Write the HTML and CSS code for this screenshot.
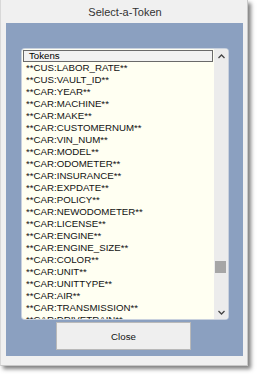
FILE: index.html
```html
<!DOCTYPE html>
<html>
<head>
<meta charset="utf-8">
<link rel="stylesheet" href="styles.css">
</head>
<body>
<div class="window">
  <div class="title">Select-a-Token</div>
  <div class="panel">
    <div class="listbox">
      <div class="list">
        <div class="header">Tokens</div>
        <div class="row">**CUS:LABOR_RATE**</div>
        <div class="row">**CUS:VAULT_ID**</div>
        <div class="row">**CAR:YEAR**</div>
        <div class="row">**CAR:MACHINE**</div>
        <div class="row">**CAR:MAKE**</div>
        <div class="row">**CAR:CUSTOMERNUM**</div>
        <div class="row">**CAR:VIN_NUM**</div>
        <div class="row">**CAR:MODEL**</div>
        <div class="row">**CAR:ODOMETER**</div>
        <div class="row">**CAR:INSURANCE**</div>
        <div class="row">**CAR:EXPDATE**</div>
        <div class="row">**CAR:POLICY**</div>
        <div class="row">**CAR:NEWODOMETER**</div>
        <div class="row">**CAR:LICENSE**</div>
        <div class="row">**CAR:ENGINE**</div>
        <div class="row">**CAR:ENGINE_SIZE**</div>
        <div class="row">**CAR:COLOR**</div>
        <div class="row">**CAR:UNIT**</div>
        <div class="row">**CAR:UNITTYPE**</div>
        <div class="row">**CAR:AIR**</div>
        <div class="row">**CAR:TRANSMISSION**</div>
        <div class="row">**CAR:DRIVETRAIN**</div>
      </div>
      <div class="scrollbar">
        <div class="arrow">
          <svg width="7" height="5" viewBox="0 0 7 5"><path d="M0.5 4 L3.5 1 L6.5 4" fill="none" stroke="#444" stroke-width="1.3"/></svg>
        </div>
        <div class="track"><div class="thumb"></div></div>
        <div class="arrow">
          <svg width="7" height="5" viewBox="0 0 7 5"><path d="M0.5 1 L3.5 4 L6.5 1" fill="none" stroke="#444" stroke-width="1.3"/></svg>
        </div>
      </div>
    </div>
    <div class="actions">
      <button class="close">Close</button>
    </div>
  </div>
</div>
</body>
</html>
```
FILE: styles.css
```css
html, body {
  margin: 0;
  padding: 0;
  background: #ffffff;
}
body {
  font-family: "Liberation Sans", Arial, sans-serif;
  width: 257px;
  height: 374px;
  overflow: hidden;
}
.window {
  width: 246px;
  height: 365px;
  background: #f0f0f0;
  border-left: 1px solid #d8d8d8;
  border-bottom: 1px solid #c8c8c8;
  border-right: 1px solid #c8c8c8;
  box-shadow: 3px 3px 4px rgba(0, 0, 0, 0.5);
  display: flex;
  flex-direction: column;
}
.title {
  height: 23px;
  line-height: 24px;
  text-align: center;
  font-size: 11px;
  color: #333;
  padding-left: 2px;
}
.panel {
  margin: 0 4px 0 5px;
  height: 333px;
  background: #8ba0c0;
  display: flex;
  flex-direction: column;
  padding: 26px 15px 0 16px;
  box-sizing: border-box;
}
.listbox {
  height: 270px;
  background: #fffff2;
  border-radius: 3px;
  display: flex;
  overflow: hidden;
  box-shadow: 0 0 0 1px #c9d1de;
}
.list {
  flex: 1;
  overflow: hidden;
  font-size: 9.7px;
  color: #111;
}
.header {
  margin: 1px 0 0 1px;
  height: 12px;
  box-sizing: border-box;
  border: 1px solid #6a6a6a;
  background: #f2f2f2;
  line-height: 10px;
  padding-left: 5px;
  color: #000;
}
.row {
  height: 12px;
  line-height: 12px;
  padding-left: 4px;
  white-space: nowrap;
}
.scrollbar {
  width: 14px;
  margin-left: 1px;
  background: #ececec;
  display: flex;
  flex-direction: column;
}
.arrow {
  height: 14px;
  display: flex;
  align-items: center;
  justify-content: center;
}
.track {
  flex: 1;
}
.thumb {
  margin: 198px 2px 0 1px;
  height: 12px;
  background: #a6a6a6;
}
.actions {
  padding-top: 3px;
  padding-left: 34px;
}
.close {
  width: 135px;
  height: 28px;
  background: #efefef;
  border: 1px solid #b9b9b9;
  border-radius: 0;
  font-family: "Liberation Sans", Arial, sans-serif;
  font-size: 9.7px;
  color: #111;
  padding: 0;
}
```
